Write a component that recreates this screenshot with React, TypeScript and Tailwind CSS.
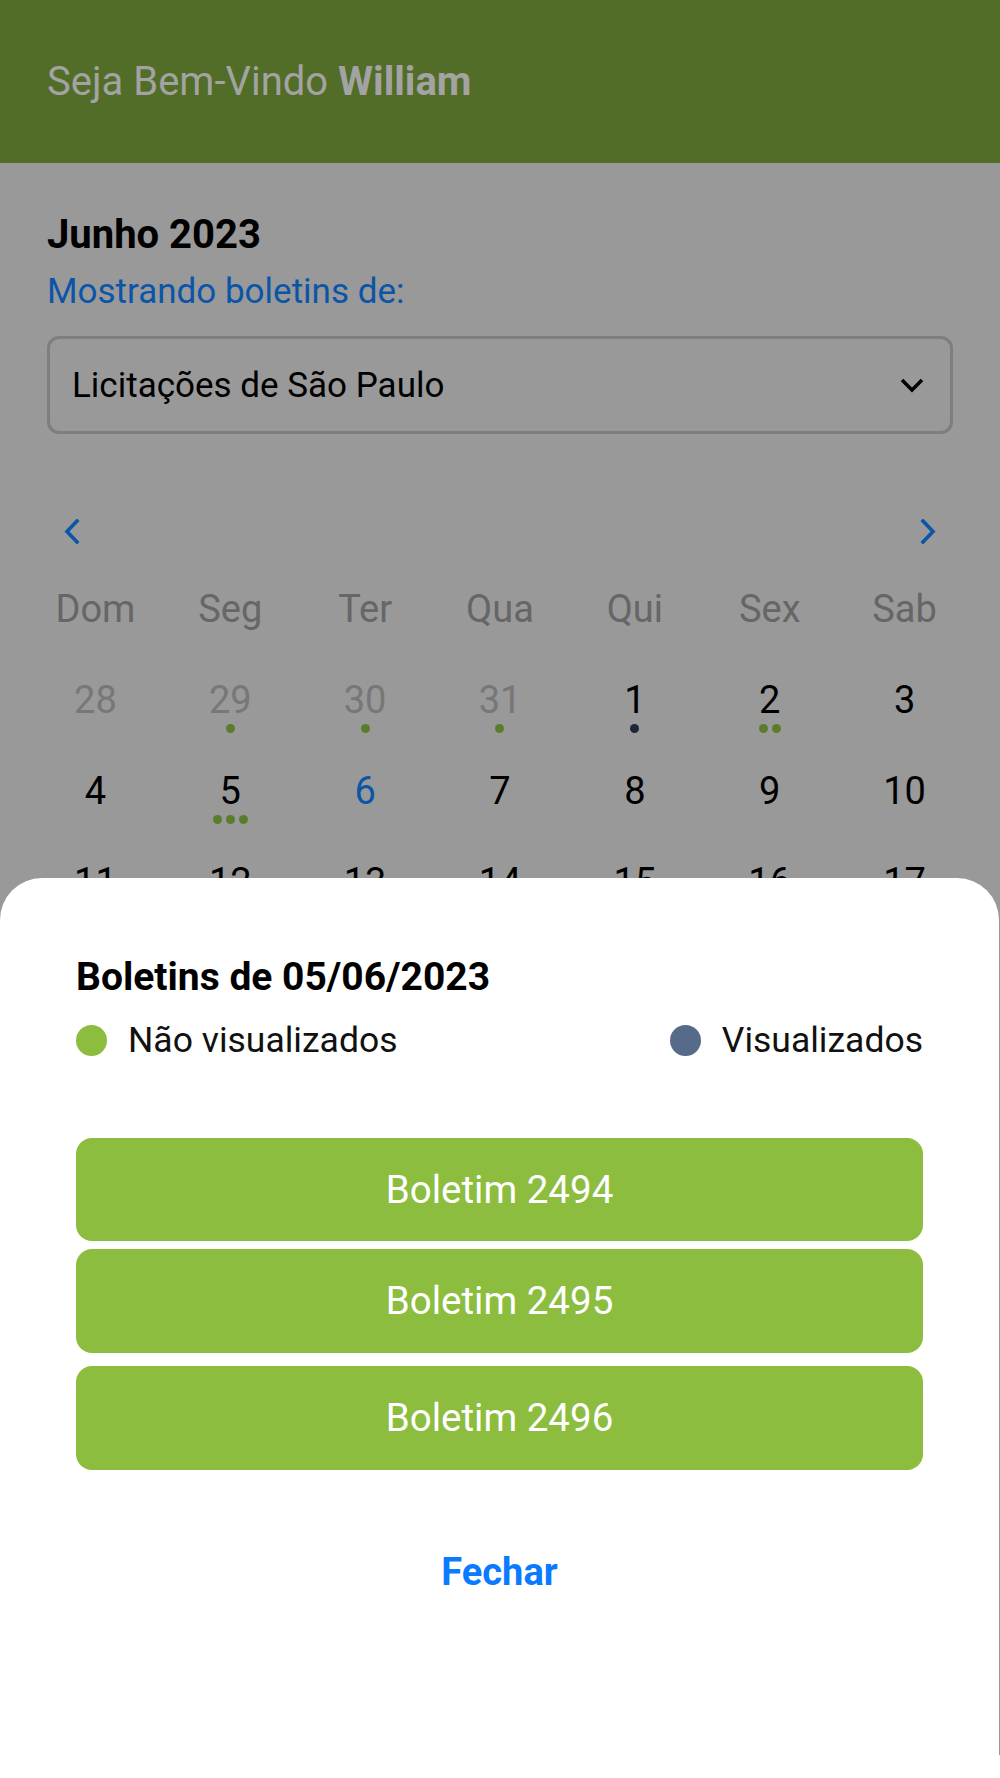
import React from 'react';

type Day = { n: number; muted?: boolean; today?: boolean; dots?: string[] };

const weekDays = ['Dom', 'Seg', 'Ter', 'Qua', 'Qui', 'Sex', 'Sab'];

const G = 'bg-[#5b7d2a]';
const V = 'bg-[#1c2737]';

// only the rows that peek out above the sheet
const weeks: Day[][] = [
    [
        { n: 28, muted: true },
        { n: 29, muted: true, dots: [G] },
        { n: 30, muted: true, dots: [G] },
        { n: 31, muted: true, dots: [G] },
        { n: 1, dots: [V] },
        { n: 2, dots: [G, G] },
        { n: 3 },
    ],
    [{ n: 4 }, { n: 5, dots: [G, G, G] }, { n: 6, today: true }, { n: 7 }, { n: 8 }, { n: 9 }, { n: 10 }],
    [{ n: 11 }, { n: 12 }, { n: 13 }, { n: 14 }, { n: 15 }, { n: 16 }, { n: 17 }],
];

const boletins = [
    { id: 2494, cls: 'h-[103px]' },
    { id: 2495, cls: 'h-[104px] mt-[8px]' },
    { id: 2496, cls: 'h-[104px] mt-[13px]' },
];

function Chevron({ dir }: { dir: 'left' | 'right' }) {
    return (
        <svg width="16" height="25" viewBox="0 0 16 25" fill="none">
            <polyline
                points={dir === 'left' ? '13,2 3,12.5 13,23' : '3,2 13,12.5 3,23'}
                stroke="#0b55a8"
                strokeWidth="3.6"
                strokeLinecap="square"
            />
        </svg>
    );
}

export default function App() {
    return (
        <div className="relative w-full h-[1778px] overflow-hidden bg-[#999999] font-['Roboto',sans-serif]">
            {/* Header */}
            <div className="h-[163px] bg-[#526d27] px-[47px] flex items-center">
                <p className="text-[40px] leading-[48px] text-[#a3a3a3]">
                    Seja Bem-Vindo <span className="font-bold">William</span>
                </p>
            </div>

            {/* Page */}
            <div className="px-[47px] pt-[48px]">
                <h1 className="text-[40px] leading-[48px] font-bold text-black">Junho 2023</h1>
                <p className="mt-[11px] text-[35px] leading-[44px] text-[#0b55a8]">Mostrando boletins de:</p>

                <div className="mt-[22px] h-[98px] rounded-[12px] border-[3px] border-[#7e7e7e] pl-[22px] pr-[26px] flex items-center justify-between">
                    <span className="mt-[2px] text-[35px] leading-[44px] text-black">Licitações de São Paulo</span>
                    <svg width="24" height="15" viewBox="0 0 24 15" fill="none">
                        <polyline points="2,2 12,12 22,2" stroke="#000" strokeWidth="3.5" />
                    </svg>
                </div>
            </div>

            {/* Calendar */}
            <div className="px-[28px]">
                <div className="mt-[85px] h-[25px] px-[36px] flex items-center justify-between">
                    <Chevron dir="left" />
                    <Chevron dir="right" />
                </div>

                <div className="mt-[42px] grid grid-cols-7">
                    {weekDays.map((d) => (
                        <div key={d} className="text-center text-[38px] leading-[46px] text-[#666666]">
                            {d}
                        </div>
                    ))}
                </div>

                <div className="mt-[45px]">
                    {weeks.map((week, wi) => (
                        <div key={wi} className="grid grid-cols-7 h-[91px]">
                            {week.map((day, di) => (
                                <div key={di} className="flex flex-col items-center">
                                    <span
                                        className={`text-[38px] leading-[46px] ${
                                            day.today ? 'text-[#0b55a8]' : day.muted ? 'text-[#777777]' : 'text-black'
                                        }`}
                                    >
                                        {day.n}
                                    </span>
                                    {day.dots && (
                                        <div className="mt-[1px] flex gap-[4px]">
                                            {day.dots.map((c, i) => (
                                                <span key={i} className={`w-[9px] h-[9px] rounded-full ${c}`} />
                                            ))}
                                        </div>
                                    )}
                                </div>
                            ))}
                        </div>
                    ))}
                </div>
            </div>

            {/* Bottom sheet */}
            <div className="absolute left-0 top-[878px] w-[999px] h-[877px] bg-white rounded-t-[42px] px-[76px] pt-[76px]">
                <h2 className="text-[39px] leading-[46px] font-bold text-black">Boletins de 05/06/2023</h2>

                <div className="mt-[18px] h-[44px] flex items-center justify-between">
                    <div className="flex items-center gap-[21px]">
                        <span className="w-[31px] h-[31px] rounded-full bg-[#8cbd3f]" />
                        <span className="text-[35.5px] leading-[44px] text-[#111111]">Não visualizados</span>
                    </div>
                    <div className="flex items-center gap-[21px]">
                        <span className="w-[31px] h-[31px] rounded-full bg-[#566a89]" />
                        <span className="text-[35.5px] leading-[44px] text-[#111111]">Visualizados</span>
                    </div>
                </div>

                <div className="mt-[76px]">
                    {boletins.map((b) => (
                        <button
                            key={b.id}
                            className={`w-full ${b.cls} rounded-[16px] bg-[#8cbd3f] flex items-center justify-center text-[38.5px] text-white`}
                        >
                            Boletim {b.id}
                        </button>
                    ))}
                </div>

                <div className="mt-[79px] flex justify-center">
                    <button className="text-[38px] leading-[46px] font-bold text-[#0a7aff]">Fechar</button>
                </div>
            </div>
            <div className="absolute left-0 bottom-0 w-full h-[23px] bg-white" />
        </div>
    );
}
